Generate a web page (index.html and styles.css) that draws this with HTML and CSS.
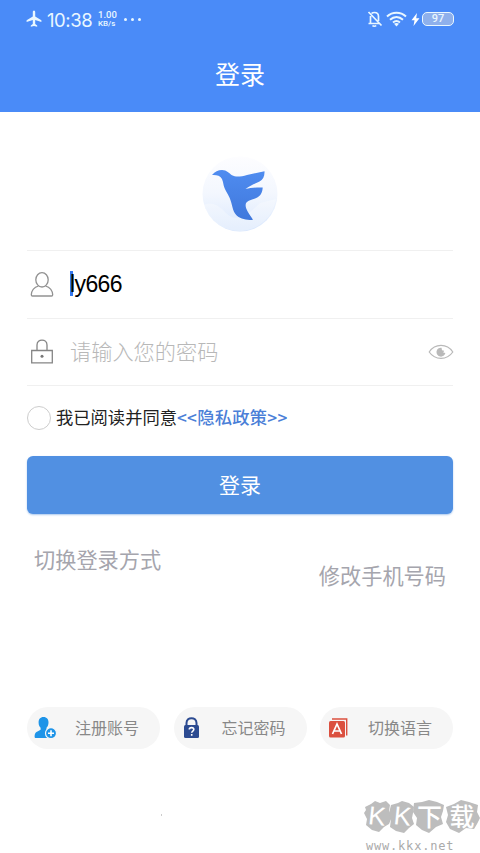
FILE: index.html
```html
<!DOCTYPE html>
<html lang="zh-CN">
<head>
<meta charset="utf-8">
<title>登录</title>
<link rel="stylesheet" href="styles.css">
</head>
<body>
<header class="header">
  <div class="status">
    <svg class="plane" width="16" height="18" viewBox="0 0 16 18"><path fill="#e9f7ff" d="M8 .5c.8 0 1.200.8 1.200 1.800v4.200l6.200 3.800v1.600L9.200 10v4l2 1.500v1.300L8 16l-3.200.8v-1.300l2-1.500v-4L.6 11.900v-1.600l6.200-3.800V2.300C6.800 1.300 7.200.5 8 .5z"/></svg>
    <span class="time">10:38</span>
    <span class="speed"><span>1.00</span><span>KB/s</span></span>
    <span class="dots"><i></i><i></i><i></i></span>
    <span class="status-right">
      <svg width="16" height="18" viewBox="0 0 16 18" fill="none" stroke="#e9f7ff" stroke-width="1.700"><path d="M4.500 3.500C5.200 2.800 6 2.500 7.500 2.500c2.500 0 4 1.700 4 4V11M3.500 6v7M1.500 13.500h10.500M1.500 2l13 13.500"/><path d="M5.500 15.500c.8 1 2.800 1 3.600 0"/></svg>
      <svg class="wifi" width="21" height="16" viewBox="0 0 21 16" fill="none" stroke="#e9f7ff" stroke-width="2"><path d="M1 5.500c5.500-5 13.500-5 19 0M4 8.700c4-3.500 9-3.500 13 0M7 11.500c2.200-1.800 4.800-1.800 7 0"/><path fill="#e9f7ff" stroke="none" d="M8 12.700c1.500-1 3.500-1 5 0L10.500 15.500z"/></svg>
      <svg class="bolt" width="9" height="13" viewBox="0 0 9 13"><path fill="#fff" d="M6 0 .5 7.300h3L2.500 13 8.500 5.300h-3.300z"/></svg>
      <span class="battery">97</span>
    </span>
  </div>
  <h1 class="title">登录</h1>
</header>
<main class="main">
  <div class="logo">
    <svg width="76" height="76" viewBox="0 0 76 76">
      <defs>
        <linearGradient id="disc" x1="0" y1="0" x2="0" y2="1"><stop offset="0" stop-color="#fdfdff"/><stop offset=".5" stop-color="#f3f7fe"/><stop offset="1" stop-color="#d9e7fd"/></linearGradient>
        <linearGradient id="bird" x1="0" y1="0" x2="0" y2="1"><stop offset="0" stop-color="#4f8cf0"/><stop offset="1" stop-color="#4078dc"/></linearGradient>
      </defs>
      <circle cx="38" cy="38" r="37.500" fill="url(#disc)"/>
      <path d="M2 49q10-5 22 8t34-10l16-4a37 37 0 0 1-72 6z" fill="#fff" opacity=".3"/>
      <path fill="url(#bird)" d="M10 19C13 15.500 16 14 20 14c5 .2 7 3.200 10 5.200 4 2.200 9 1.300 15-.3L62.500 15.300c.3 5-1.500 8.500-5 10.200-4 2.200-9.500 3.500-14 7.600 5-1.300 11-1.800 17.200-1.600-.2 5-2.200 8.800-6.500 10.500-4.200 2-8.500 2.300-10.200 5.300-1.500 4 1.800 9 7 16.400-7 .8-13.800-1.200-16.800-4.600-3.900-4.300-3.800-10.500-6.500-17-2.200-5.300-5-8-6-12.500-.8-5-1.700-8.300-5.200-9.800-2-.8-4-1-6.500-.8z"/>
    </svg>
  </div>
  <div class="field field-user">
    <svg class="field-icon" width="24" height="28" viewBox="0 0 24 28" fill="none" stroke="#929292" stroke-width="1.300"><ellipse cx="12" cy="8.800" rx="6.200" ry="7.200"/><path d="M8.500 15C4 16.300 1.600 19.500 1.300 23.800q0 1.200 1.200 1.200h19q1.200 0 1.200-1.200C22.400 19.500 20 16.300 15.500 15"/></svg>
    <span class="value"><i class="caret"></i>ly666</span>
  </div>
  <div class="field">
    <svg class="field-icon" width="24" height="28" viewBox="0 0 24 28" fill="none" stroke="#858585" stroke-width="1.300"><path d="M1.700 12.500h20.600v12.300H1.700zM7 12.500V7c0-6.500 10-6.500 10 0v5.500"/><circle cx="12" cy="18.200" r="1.500" fill="#777" stroke="none"/></svg>
    <span class="placeholder">请输入您的密码</span>
    <svg class="eye" width="26" height="16" viewBox="0 0 26 16" fill="none" stroke="#b9b9b9" stroke-width="1.200"><path d="M1.200 8C7-.8 19-.8 24.800 8 19 16.400 7 16.400 1.200 8z"/><path fill="#b9b9b9" stroke="none" d="M13.500 3.700a4.500 4.500 0 1 0 3.900 5.300l-2.200-.5 1-1.700-2.200-.6z"/></svg>
  </div>
  <div class="consent"><span class="radio"></span><span class="agree">我已阅读并同意</span><span class="policy">&lt;&lt;隐私政策&gt;&gt;</span></div>
  <div class="submit">登录</div>
  <div class="links"><span>切换登录方式</span><span class="phone">修改手机号码</span></div>
  <div class="actions">
    <div class="pill">
      <svg width="24" height="24" viewBox="0 0 24 24"><path fill="#1e94e8" d="M9.500 1c3.300 0 5 2.300 5 5.500 0 2.300-.7 4-2 5.200v2l4 2.300-2 6H2c-1 0-1.400-.5-1.400-1.500 0-4.500 2-4.500 6-6.800v-2C5.300 10.500 4.600 9 4.600 6.500 4.600 3.300 6.200 1 9.500 1z"/><circle cx="17" cy="17.200" r="5.500" fill="#1e94e8" stroke="#f7f7f7" stroke-width="1.200"/><path stroke="#fff" stroke-width="1.600" d="M17 14.200v6M14 17.200h6"/></svg>
      <span>注册账号</span>
    </div>
    <div class="pill">
      <svg width="24" height="24" viewBox="0 0 24 24"><path fill="none" stroke="#2c4b91" stroke-width="2" d="M5.500 10V7c0-6.500 10-6.500 10 0v3"/><rect x="3" y="9" width="15" height="13" rx="1.500" fill="#2c4b91"/><path fill="none" stroke="#fff" stroke-width="1.600" d="M8.300 13.500c0-2.500 4.500-2.500 4.500 0 0 1.500-2.100 1.600-2.100 3.300M10.700 18v1.700"/></svg>
      <span>忘记密码</span>
    </div>
    <div class="pill">
      <svg width="24" height="24" viewBox="0 0 24 24"><path fill="none" stroke="#db503f" stroke-width="1.400" d="M5 3h14.700v16.500"/><rect x="2" y="5" width="16" height="16.500" rx="1.500" fill="#db503f"/><path fill="none" stroke="#fff" stroke-width="1.700" d="m5.500 18 4.500-10 4.500 10M7.200 15h5.600"/></svg>
      <span>切换语言</span>
    </div>
  </div>
</main>
<div class="speck"></div>
<div class="watermark">
  <svg class="rocks" width="116" height="34" viewBox="0 0 116 34" fill="#bdbdbd"><path d="m1 7 6-3 4-3 5 2 6-2 4 4-1 6 3 6-3 7-5 3-5 5-7-2-6-5 1-6-3-6 2-3z"/><path d="m27 5 7-2 4-2 7 2 5 4-1 6-1 5 2 6-5 4-5 5-8-2-6-4 1-8-2-6z"/><path d="m50 3 8-1 7-2 8 2 7 3-1 6-2 6 2 7-7 3-7 6-7-3-6-5 1-7-4-6z"/><path d="m82 7 8-3 7-4 8 2 9 3-1 7 3 6-3 6-3 5-8-1-7 5-9-4-4-7 2-7z"/></svg>
  <div class="wm-name"><span>K</span><span>K</span><span>下</span><span>载</span></div>
  <div class="wm-url">www.kkx.net</div>
</div>
</body>
</html>
```
FILE: styles.css
```css
* { box-sizing: border-box; }
body {
  margin: 0;
  width: 480px;
  height: 853px;
  overflow: hidden;
  position: relative;
  background: #fff;
  font-family: "Liberation Sans", "Noto Sans CJK SC", sans-serif;
}
svg { display: block; flex: none; }
.header { height: 112px; background: #4a8bf8; color: #fff; }
.status { height: 38px; display: flex; align-items: center; padding: 0 26px; color: #e9f7ff; }
.time { font: 18.500px/38px Inter, sans-serif; letter-spacing: -.45px; margin: 1px 0 0 5px; width: 46px; white-space: nowrap; }
.speed { display: flex; flex-direction: column; width: 22px; margin-left: 5px; margin-top: -1px; font-family: Roboto, sans-serif; font-weight: 500; line-height: 9px; }
.speed span:first-child { font-size: 9.500px; }
.speed span:last-child { font-size: 8px; }
.dots { display: flex; gap: 4px; margin-left: 4px; }
.dots i { width: 3px; height: 3px; border-radius: 50%; background: #e9f7ff; }
.status-right { margin-left: auto; display: flex; align-items: center; }
.wifi { margin-left: 3px; }
.bolt { margin: 0 2px 0 4px; }
.battery {
  width: 32px; height: 14px; border: 1.500px solid #e9f7ff; border-radius: 5px;
  background: #8eb0ec; font: 500 11px/12px Roboto, sans-serif; text-align: center;
}
.title { margin: 0; font-size: 25px; line-height: 74px; font-weight: 400; text-align: center; }
.main { padding: 0 27px; }
.logo { height: 139px; padding-top: 44px; display: flex; justify-content: center; border-bottom: 1px solid #f0f0f0; }
.field { height: 67px; display: flex; align-items: center; border-bottom: 1px solid #f0f0f0; }
.field-user { height: 68px; }
.field-icon { margin-left: 3px; }
.value { margin-left: 16px; position: relative; font-size: 23px; letter-spacing: -.6px; color: #000; }
.caret { position: absolute; left: 0; top: 0; width: 3px; height: 25px; background: #3478f0; z-index: -1; }
.placeholder { margin: 2px 0 0 16px; font-size: 21.200px; line-height: 30px; color: #b8b8b8; font-weight: 300; }
.eye { margin-left: auto; margin-right: -1px; }
.consent { height: 70px; padding-bottom: 7px; display: flex; align-items: center; font-size: 17.300px; color: #222; white-space: nowrap; }
.radio { width: 24px; height: 24px; border: 1px solid #cdcdcd; border-radius: 50%; margin-right: 5px; }
.agree, .policy { font-family: "Noto Sans CJK SC", sans-serif; line-height: 24px; margin-top: -2px; }
.policy { color: #4b7fd8; font-weight: 500; letter-spacing: .25px; }
.submit {
  height: 58px; border-radius: 6px; background: #5190e2; color: #fff;
  font-size: 21px; line-height: 59px; text-align: center; box-shadow: 0 1px 2px #aac8ee;
}
.links { display: flex; justify-content: space-between; height: 193px; padding: 31px 7px 0; font-size: 21.200px; line-height: 31px; color: #a5a5ad; }
.phone { margin-top: 16px; }
.actions { display: flex; justify-content: space-between; }
.pill { width: 133px; height: 42px; border-radius: 21px; background: #f6f6f6; display: flex; align-items: center; padding-left: 7px; color: #888; font-size: 16px; }
.pill span { margin: -2px 0 0 17px; white-space: nowrap; }
.speck { position: absolute; left: 161px; top: 814px; width: 1px; height: 2px; background: #ccc; }
.watermark { position: absolute; left: 364px; top: 800px; width: 116px; height: 53px; }
.rocks { position: absolute; left: 0; top: 0; }
.wm-name { position: relative; display: grid; grid-template-columns: 26px 25px 29px 36px; height: 34px; color: #fff; font-size: 25px; font-weight: 500; line-height: 34px; text-align: center; }
.wm-name span:nth-child(-n+2) { font-size: 26px; line-height: 32px; transform: rotate(6deg); }
.wm-url { position: relative; margin-top: 4px; padding-left: 2px; font: 12px/16px "DejaVu Sans Mono", monospace; letter-spacing: .8px; color: #aaa; }
```
